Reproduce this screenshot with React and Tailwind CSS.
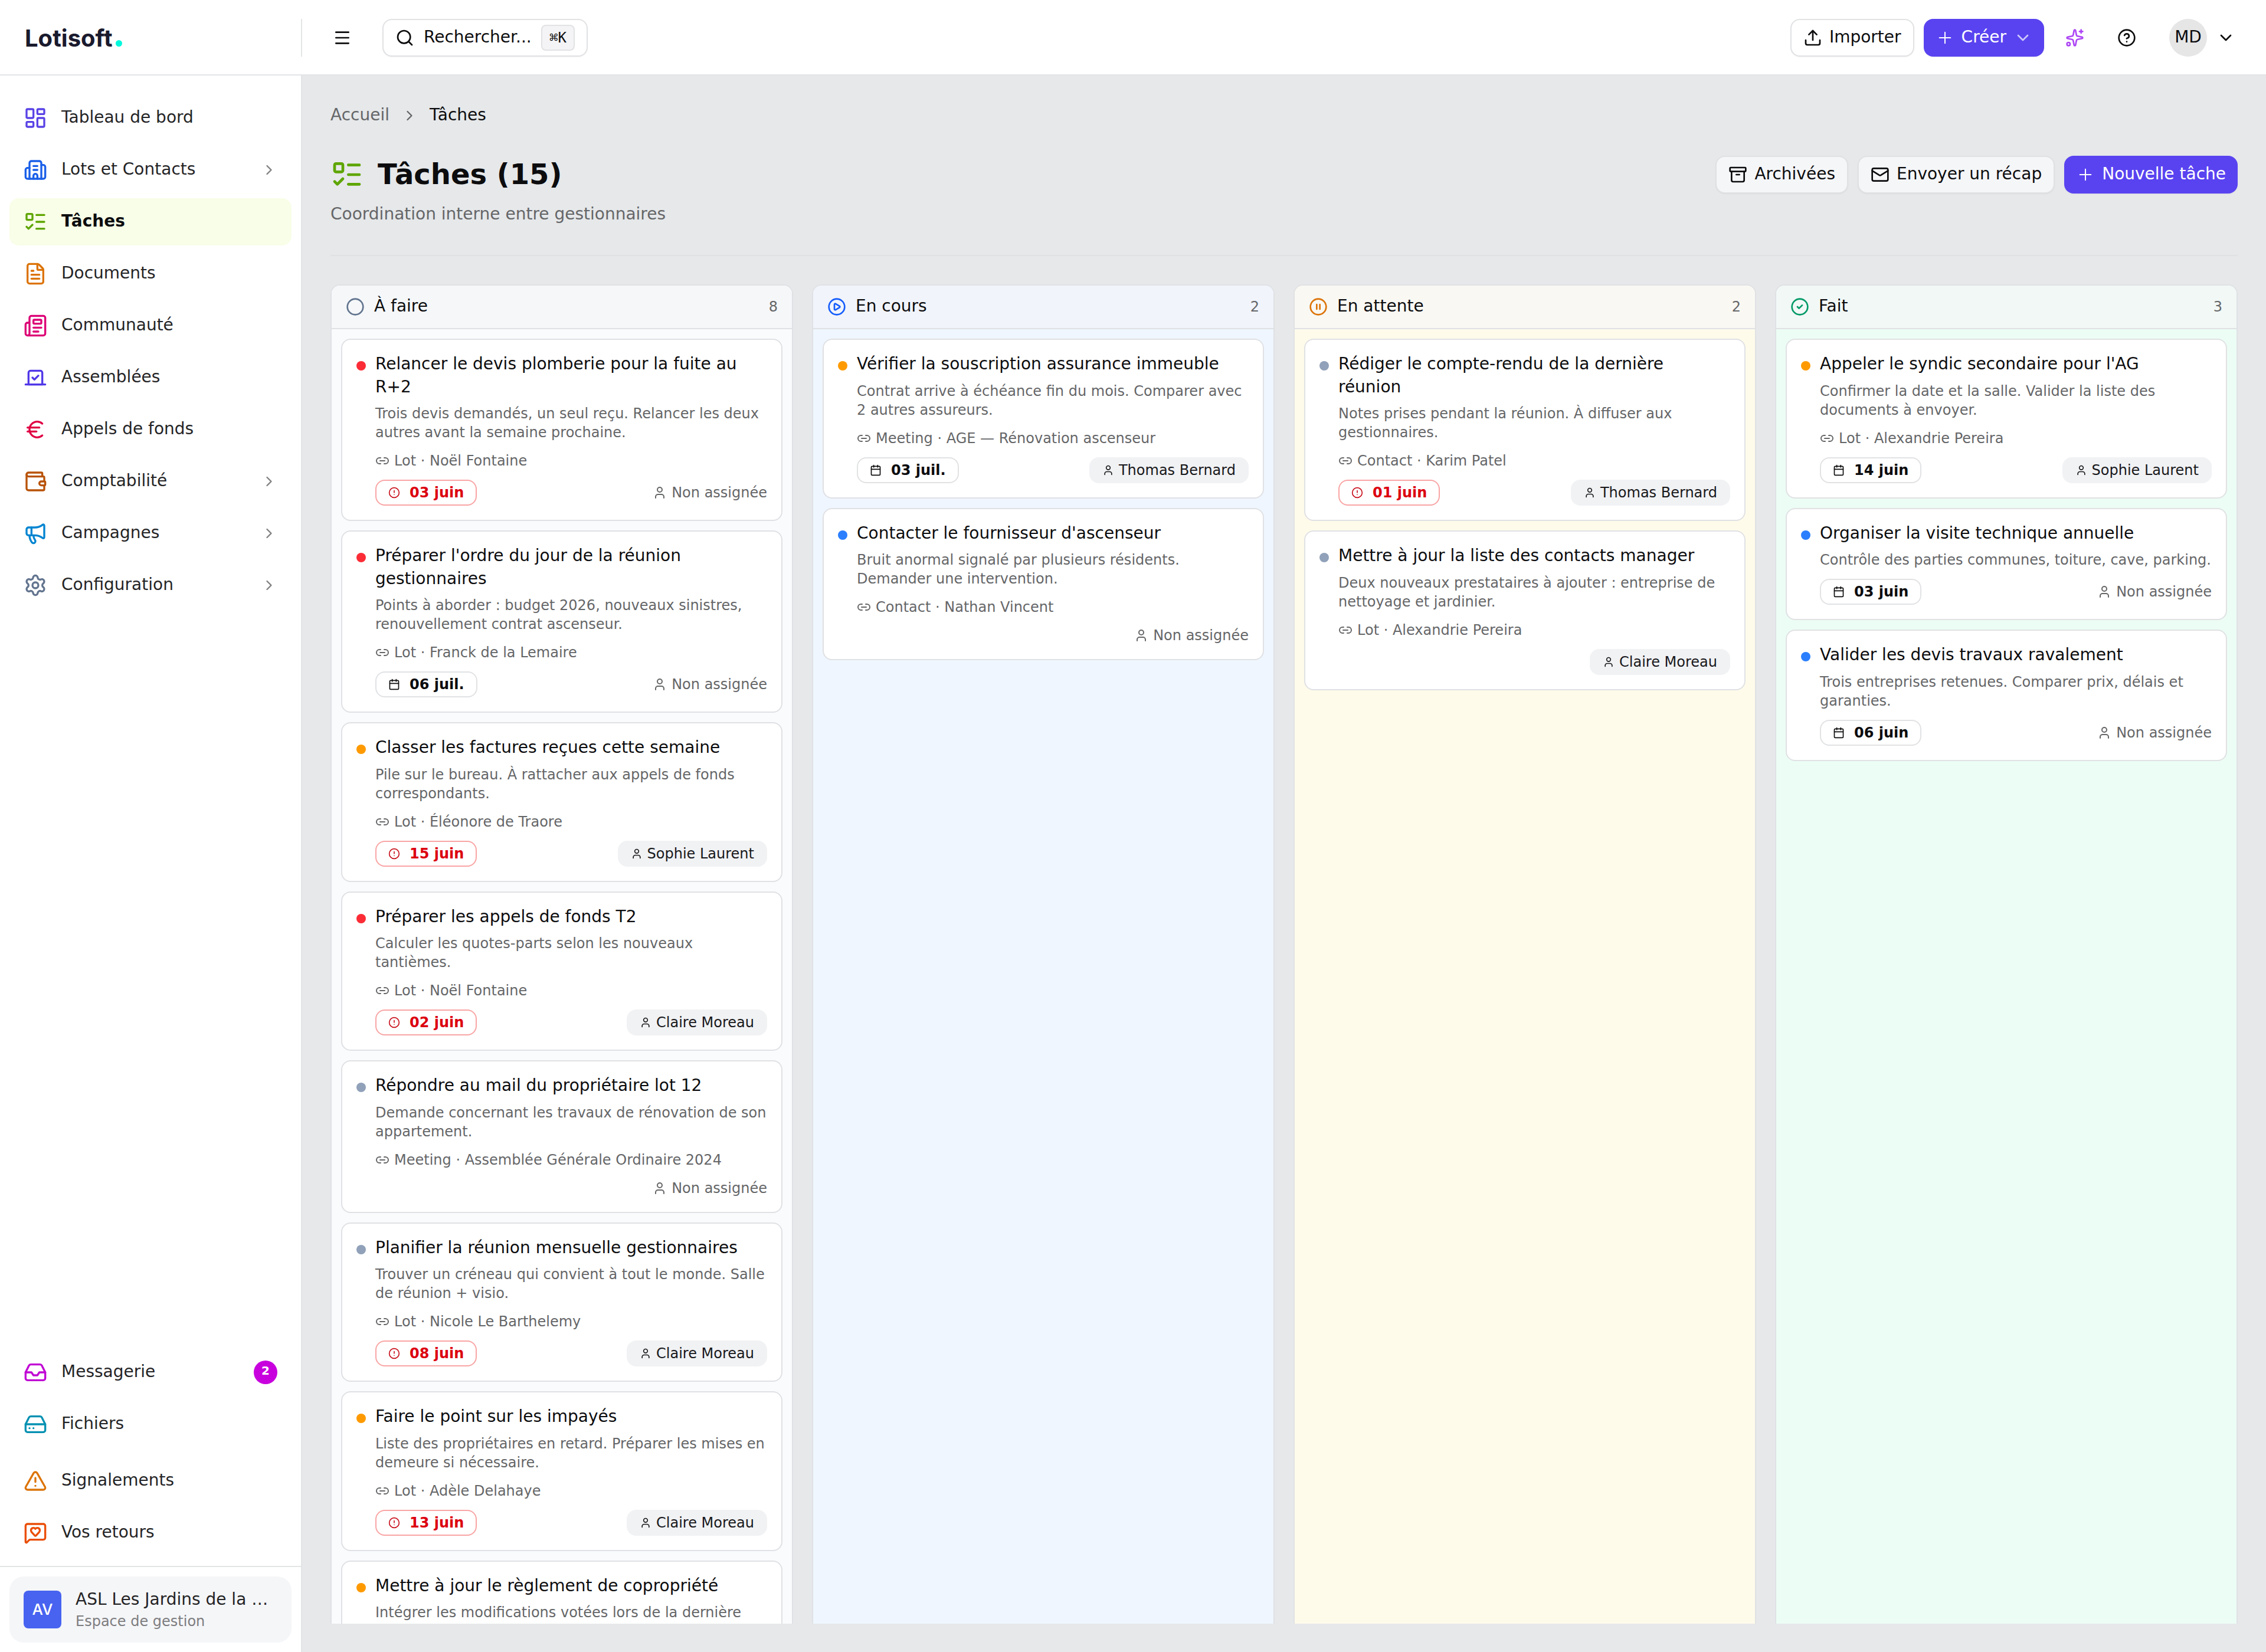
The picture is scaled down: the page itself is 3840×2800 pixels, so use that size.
import {
  Archive,
  Building2,
  Calendar,
  ChevronDown,
  ChevronRight,
  Circle,
  CircleAlert,
  CircleCheck,
  CirclePause,
  CirclePlay,
  CircleQuestionMark,
  Euro,
  FileText,
  HardDrive,
  Inbox,
  LayoutDashboard,
  Link2,
  ListTodo,
  Mail,
  Megaphone,
  Menu,
  MessageSquareHeart,
  Newspaper,
  Plus,
  Search,
  Settings,
  Sparkles,
  TriangleAlert,
  Upload,
  User,
  Vote,
  Wallet,
} from 'lucide-react';
import clsx from 'clsx';

const mainNav = [
  { label: 'Tableau de bord', icon: LayoutDashboard, color: 'text-[#5943e6]' },
  { label: 'Lots et Contacts', icon: Building2, color: 'text-[#1a5fe8]', expandable: true },
  { label: 'Tâches', icon: ListTodo, color: 'text-lime-600', active: true },
  { label: 'Documents', icon: FileText, color: 'text-[#dc7408]' },
  { label: 'Communauté', icon: Newspaper, color: 'text-[#dd0076]' },
  { label: 'Assemblées', icon: Vote, color: 'text-[#5038e8]' },
  { label: 'Appels de fonds', icon: Euro, color: 'text-[#e00044]' },
  { label: 'Comptabilité', icon: Wallet, color: 'text-[#b85206]', expandable: true },
  { label: 'Campagnes', icon: Megaphone, color: 'text-sky-600', expandable: true },
  { label: 'Configuration', icon: Settings, color: 'text-slate-500', expandable: true },
];

const toolsNav = [
  { label: 'Messagerie', icon: Inbox, color: 'text-[#c006d4]', badge: 2 },
  { label: 'Fichiers', icon: HardDrive, color: 'text-[#0691b2]' },
];

const supportNav = [
  { label: 'Signalements', icon: TriangleAlert, color: 'text-[#dc7408]' },
  { label: 'Vos retours', icon: MessageSquareHeart, color: 'text-[#ea4e08]' },
];

const priorityColors = {
  urgent: 'bg-[#fb2c36]',
  high: 'bg-[#fe9a00]',
  normal: 'bg-[#2b7fff]',
  low: 'bg-[#90a1b9]',
};

const columns = [
  {
    title: 'À faire',
    count: 8,
    icon: Circle,
    iconColor: 'text-slate-500',
    header: 'bg-[#f5f7f9]',
    body: 'bg-[#f9fbfd]',
    tasks: [
      {
        title: 'Relancer le devis plomberie pour la fuite au R+2',
        description: 'Trois devis demandés, un seul reçu. Relancer les deux autres avant la semaine prochaine.',
        link: 'Lot · Noël Fontaine',
        due: '03 juin',
        late: true,
        priority: 'urgent',
        assignee: null,
      },
      {
        title: "Préparer l'ordre du jour de la réunion gestionnaires",
        description: 'Points à aborder : budget 2026, nouveaux sinistres, renouvellement contrat ascenseur.',
        link: 'Lot · Franck de la Lemaire',
        due: '06 juil.',
        priority: 'urgent',
        assignee: null,
      },
      {
        title: 'Classer les factures reçues cette semaine',
        description: 'Pile sur le bureau. À rattacher aux appels de fonds correspondants.',
        link: 'Lot · Éléonore de Traore',
        due: '15 juin',
        late: true,
        priority: 'high',
        assignee: 'Sophie Laurent',
      },
      {
        title: 'Préparer les appels de fonds T2',
        description: 'Calculer les quotes-parts selon les nouveaux tantièmes.',
        link: 'Lot · Noël Fontaine',
        due: '02 juin',
        late: true,
        priority: 'urgent',
        assignee: 'Claire Moreau',
      },
      {
        title: 'Répondre au mail du propriétaire lot 12',
        description: 'Demande concernant les travaux de rénovation de son appartement.',
        link: 'Meeting · Assemblée Générale Ordinaire 2024',
        priority: 'low',
        assignee: null,
      },
      {
        title: 'Planifier la réunion mensuelle gestionnaires',
        description: 'Trouver un créneau qui convient à tout le monde. Salle de réunion + visio.',
        link: 'Lot · Nicole Le Barthelemy',
        due: '08 juin',
        late: true,
        priority: 'low',
        assignee: 'Claire Moreau',
      },
      {
        title: 'Faire le point sur les impayés',
        description: 'Liste des propriétaires en retard. Préparer les mises en demeure si nécessaire.',
        link: 'Lot · Adèle Delahaye',
        due: '13 juin',
        late: true,
        priority: 'high',
        assignee: 'Claire Moreau',
      },
      {
        title: 'Mettre à jour le règlement de copropriété',
        description: 'Intégrer les modifications votées lors de la dernière',
        priority: 'high',
      },
    ],
  },
  {
    title: 'En cours',
    count: 2,
    icon: CirclePlay,
    iconColor: 'text-blue-600',
    header: 'bg-[#f1f4fb]',
    body: 'bg-[#eff6ff]',
    tasks: [
      {
        title: 'Vérifier la souscription assurance immeuble',
        description: 'Contrat arrive à échéance fin du mois. Comparer avec 2 autres assureurs.',
        link: 'Meeting · AGE — Rénovation ascenseur',
        due: '03 juil.',
        priority: 'high',
        assignee: 'Thomas Bernard',
      },
      {
        title: "Contacter le fournisseur d'ascenseur",
        description: 'Bruit anormal signalé par plusieurs résidents. Demander une intervention.',
        link: 'Contact · Nathan Vincent',
        priority: 'normal',
        assignee: null,
      },
    ],
  },
  {
    title: 'En attente',
    count: 2,
    icon: CirclePause,
    iconColor: 'text-[#dc7408]',
    header: 'bg-[#f9f8f3]',
    body: 'bg-[#fffbeb]',
    tasks: [
      {
        title: 'Rédiger le compte-rendu de la dernière réunion',
        description: 'Notes prises pendant la réunion. À diffuser aux gestionnaires.',
        link: 'Contact · Karim Patel',
        due: '01 juin',
        late: true,
        priority: 'low',
        assignee: 'Thomas Bernard',
      },
      {
        title: 'Mettre à jour la liste des contacts manager',
        description: 'Deux nouveaux prestataires à ajouter : entreprise de nettoyage et jardinier.',
        link: 'Lot · Alexandrie Pereira',
        priority: 'low',
        assignee: 'Claire Moreau',
      },
    ],
  },
  {
    title: 'Fait',
    count: 3,
    icon: CircleCheck,
    iconColor: 'text-emerald-600',
    header: 'bg-[#f1f8f6]',
    body: 'bg-[#ecfdf5]',
    tasks: [
      {
        title: "Appeler le syndic secondaire pour l'AG",
        description: 'Confirmer la date et la salle. Valider la liste des documents à envoyer.',
        link: 'Lot · Alexandrie Pereira',
        due: '14 juin',
        priority: 'high',
        assignee: 'Sophie Laurent',
      },
      {
        title: 'Organiser la visite technique annuelle',
        description: 'Contrôle des parties communes, toiture, cave, parking.',
        due: '03 juin',
        priority: 'normal',
        assignee: null,
      },
      {
        title: 'Valider les devis travaux ravalement',
        description: 'Trois entreprises retenues. Comparer prix, délais et garanties.',
        due: '06 juin',
        priority: 'normal',
        assignee: null,
      },
    ],
  },
];

function Header() {
  return (
    <header className="flex h-32 shrink-0 items-center border-b-2 border-[#e3e4e6] bg-white pt-0.5">
      <div className="flex h-16 w-[512px] items-center border-r-2 border-[#e3e4e6] pl-[42px]">
        <span className="flex items-baseline pt-0.5 font-['Inter',sans-serif] text-[40px] leading-[48px] font-bold text-[#1a1a2e]">
          Lotisoft
          <span className="ml-[5px] size-[11px] rounded-full bg-[#00f8dc]" />
        </span>
      </div>

      <div className="flex flex-1 items-center gap-8 px-8">
        <button className="flex h-16 w-18 items-center justify-center">
          <Menu className="size-8" />
        </button>
        <button className="flex h-16 w-[348px] items-center gap-4 rounded-2xl border-2 border-[#e1e2e4] bg-white px-5 shadow-xs">
          <Search className="size-8" />
          <span className="pb-0.5 leading-[38px]">Rechercher...</span>
          <kbd className="ml-auto flex h-11 items-center rounded-lg border-2 border-[#e1e2e4] bg-[#f4f4f6] px-3 font-['DejaVu_Sans_Mono',monospace] text-2xl">
            ⌘K
          </kbd>
        </button>

        <div className="ml-auto flex items-center gap-4">
          <button className="flex h-16 items-center gap-3 rounded-2xl border-2 border-[#e1e2e4] bg-white px-5 shadow-xs">
            <Upload className="size-8" />
            <span className="pb-0.5 leading-[38px]">Importer</span>
          </button>
          <button className="flex h-16 items-center gap-3 rounded-2xl bg-[#5943f0] px-5 text-white shadow-xs">
            <Plus className="size-8" strokeWidth={1.5} />
            <span className="pb-0.5 leading-[38px]">Créer</span>
            <ChevronDown className="size-8 opacity-70" />
          </button>
          <button className="flex h-16 w-18 items-center justify-center text-[#ad46f5]">
            <Sparkles className="size-8" />
          </button>
          <button className="flex h-16 w-18 items-center justify-center">
            <CircleQuestionMark className="size-8" />
          </button>
          <button className="flex h-16 items-center gap-4 px-5">
            <span className="flex size-16 items-center justify-center rounded-full bg-[#e6e6e6] pb-0.5">MD</span>
            <ChevronDown className="size-8" />
          </button>
        </div>
      </div>
    </header>
  );
}

function NavItem({ item }) {
  const Icon = item.icon;

  return (
    <a
      className={clsx(
        'flex h-20 items-center gap-6 rounded-2xl px-6',
        item.active ? 'bg-[#f8fee7] font-bold text-[#0c0c0e]' : 'text-[#242426]'
      )}
    >
      <Icon className={clsx('size-10 shrink-0', item.color)} />
      <span className="flex-1 pb-0.5 leading-[38px]">{item.label}</span>
      {item.expandable && <ChevronRight className="size-7 text-[#808082]" />}
      {item.badge && (
        <span className="flex size-10 items-center justify-center rounded-full bg-fuchsia-600 pb-1.5 text-xl leading-8 font-bold text-white">
          {item.badge}
        </span>
      )}
    </a>
  );
}

function Sidebar() {
  return (
    <aside className="flex w-[512px] shrink-0 flex-col border-r-2 border-[#e3e4e6] bg-white">
      <nav className="flex flex-1 flex-col gap-2 px-4 pt-8">
        {mainNav.map(item => (
          <NavItem key={item.label} item={item} />
        ))}
      </nav>

      <div className="flex flex-col gap-4 p-4">
        <nav className="flex flex-col gap-2">
          {toolsNav.map(item => (
            <NavItem key={item.label} item={item} />
          ))}
        </nav>
        <nav className="flex flex-col gap-2">
          {supportNav.map(item => (
            <NavItem key={item.label} item={item} />
          ))}
        </nav>
      </div>

      {/* Espace courant */}
      <div className="border-t-2 border-[#e3e4e6] p-4">
        <div className="flex h-28 items-center gap-6 rounded-3xl bg-[#f5f6f8] px-6">
          <span className="flex size-16 shrink-0 items-center justify-center rounded-lg bg-[#4763f0] font-['Inter',sans-serif] text-[26px] font-medium text-white">
            AV
          </span>
          <div className="min-w-0 flex-1">
            <p className="pb-0.5 leading-[38px] whitespace-nowrap text-[#242426]">ASL Les Jardins de la …</p>
            <p className="text-2xl leading-8 text-[#7d7d80]">Espace de gestion</p>
          </div>
        </div>
      </div>
    </aside>
  );
}

function PageHeader() {
  return (
    <div className="flex shrink-0 items-start justify-between border-b-2 border-[#e0e1e3] pb-12">
      <div>
        <div className="flex items-center gap-6">
          <ListTodo className="size-14 text-lime-600" />
          <h1 className="pb-0.5 text-5xl leading-[62px] font-bold">Tâches (15)</h1>
        </div>
        <p className="mt-4 pb-0.5 leading-[38px] text-[#656668]">Coordination interne entre gestionnaires</p>
      </div>
      <div className="flex items-center gap-4">
        <button className="flex h-16 items-center gap-3 rounded-2xl border-2 border-[#e0e1e3] bg-[#f5f6f8] px-5 shadow-xs">
          <Archive className="size-8" />
          <span className="pb-0.5 leading-[38px]">Archivées</span>
        </button>
        <button className="flex h-16 items-center gap-3 rounded-2xl border-2 border-[#e0e1e3] bg-[#f5f6f8] px-5 shadow-xs">
          <Mail className="size-8" />
          <span className="pb-0.5 leading-[38px]">Envoyer un récap</span>
        </button>
        <button className="flex h-16 items-center gap-3 rounded-2xl bg-[#5943f0] px-5 text-white shadow-xs">
          <Plus className="size-8" strokeWidth={1.5} />
          <span className="pb-0.5 leading-[38px]">Nouvelle tâche</span>
        </button>
      </div>
    </div>
  );
}

function DueBadge({ date, late }) {
  const Icon = late ? CircleAlert : Calendar;

  return (
    <span
      className={clsx(
        'flex h-11 items-center gap-4 rounded-2xl border-2 px-5 font-bold',
        late ? 'border-[#f9a5a5] text-[#dc000f]' : 'border-[#e1e2e4] text-[#0c0c0e]'
      )}
    >
      <Icon className={clsx('size-5', late && 'text-[#c8101c]')} />
      {date}
    </span>
  );
}

function Assignee({ name }) {
  if (!name) {
    return (
      <span className="ml-auto flex items-center gap-2 text-[#656668]">
        <User className="size-6" />
        Non assignée
      </span>
    );
  }

  return (
    <span className="ml-auto flex h-11 items-center gap-2 rounded-2xl bg-[#f1f2f4] px-[22px] text-[#18181b]">
      <User className="size-5" />
      {name}
    </span>
  );
}

function TaskCard({ task }) {
  return (
    <article className="flex gap-4 rounded-2xl border-2 border-[#e0e1e4] bg-white p-6">
      <span className={clsx('mt-3 size-4 shrink-0 rounded-full', priorityColors[task.priority])} />
      <div className="min-w-0 flex-1 text-2xl leading-8">
        <h3 className="-mt-0.5 pb-0.5 text-[28px] leading-snug">{task.title}</h3>
        <p className="mt-2 text-[#656668]">{task.description}</p>
        {task.link && (
          <p className="mt-4 flex items-center gap-2 text-[#656668]">
            <Link2 className="size-6" />
            {task.link}
          </p>
        )}
        {task.assignee !== undefined && (
          <div className="mt-4 flex items-center">
            {task.due && <DueBadge date={task.due} late={task.late} />}
            <Assignee name={task.assignee} />
          </div>
        )}
      </div>
    </article>
  );
}

function Column({ column }) {
  const Icon = column.icon;

  return (
    <section className={clsx('overflow-hidden rounded-t-2xl border-2 border-[#e0e1e4]', column.body)}>
      <div className={clsx('flex h-[74px] items-center gap-4 border-b-2 border-[#e0e1e4] px-6', column.header)}>
        <Icon className={clsx('size-8', column.iconColor)} />
        <h2 className="flex-1 pb-0.5 leading-[38px]">{column.title}</h2>
        <span className="text-2xl text-[#656668]">{column.count}</span>
      </div>
      <div className="flex flex-col gap-4 p-4">
        {column.tasks.map(task => (
          <TaskCard key={task.title} task={task} />
        ))}
      </div>
    </section>
  );
}

export default function App() {
  return (
    <div className="flex h-[2800px] w-[3840px] flex-col overflow-hidden bg-[#e6e8ea] font-['DejaVu_Sans',sans-serif] text-[28px] leading-10 text-[#0c0c0e]">
      <Header />
      <div className="flex min-h-0 flex-1">
        <Sidebar />
        <main className="flex min-w-0 flex-1 flex-col gap-12 p-12">
          <div className="flex shrink-0 items-center gap-5">
            <span className="pb-0.5 leading-[38px] text-[#656668]">Accueil</span>
            <ChevronRight className="size-7 text-[#656668]" />
            <span className="pb-0.5 leading-[38px]">Tâches</span>
          </div>
          <PageHeader />
          {/* Les colonnes dépassent de la zone visible */}
          <div className="min-h-0 flex-1 overflow-hidden">
            <div className="grid min-h-full grid-cols-4 gap-8">
              {columns.map(column => (
                <Column key={column.title} column={column} />
              ))}
            </div>
          </div>
        </main>
      </div>
    </div>
  );
}
